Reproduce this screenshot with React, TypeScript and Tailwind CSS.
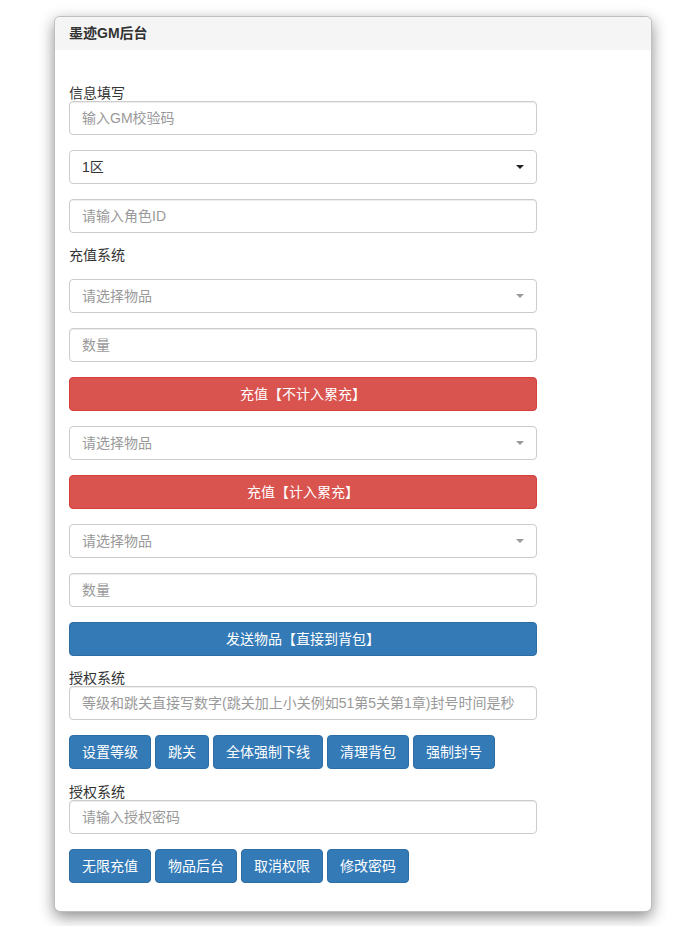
import React from 'react'

const font = "font-['Liberation_Sans','Noto_Sans_CJK_SC',sans-serif]"

const inputCls =
  'block h-[34px] w-full rounded-[4px] border border-[#ccc] bg-white px-3 text-[14px] leading-5 text-[#555] placeholder:text-[#999] shadow-[inset_0_1px_1px_rgba(0,0,0,0.075)] outline-none'

function TextInput({ placeholder, className = '' }: { placeholder: string; className?: string }) {
  return <input type="text" placeholder={placeholder} className={`${inputCls} ${className}`} />
}

function SelectBox({ label, muted, className = '' }: { label: string; muted?: boolean; className?: string }) {
  return (
    <div
      className={`flex h-[34px] w-full items-center justify-between rounded-[4px] border border-[#ccc] bg-white pl-3 pr-[12px] text-[14px] leading-5 ${
        muted ? 'text-[#999]' : 'text-[#333]'
      } ${className}`}
    >
      <span>{label}</span>
      <span
        className={`h-0 w-0 border-x-[4px] border-t-[4px] border-x-transparent ${
          muted ? 'border-t-[#999]' : 'border-t-[#222]'
        }`}
      />
    </div>
  )
}

function WideButton({ text, color, className = '' }: { text: string; color: 'red' | 'blue'; className?: string }) {
  const tone =
    color === 'red'
      ? 'bg-[#d9534f] border-[#d43f3a]'
      : 'bg-[#337ab7] border-[#2e6da4]'
  return (
    <button
      type="button"
      className={`block h-[34px] w-full rounded-[4px] border text-[14px] leading-5 text-white ${tone} ${className}`}
    >
      {text}
    </button>
  )
}

function SmallButton({ text }: { text: string }) {
  return (
    <button
      type="button"
      className="h-[34px] rounded-[4px] border border-[#2e6da4] bg-[#337ab7] px-3 text-[14px] leading-5 text-white"
    >
      {text}
    </button>
  )
}

export default function App() {
  return (
    <div className={`min-h-screen bg-white pl-[54px] pt-[16px] text-[#333] ${font}`}>
      <div className="w-[598px] rounded-[6px] border border-[rgba(0,0,0,0.25)] bg-white shadow-[0_5px_15px_rgba(0,0,0,0.45)]">
        {/* Header */}
        <div className="flex h-[33px] items-center rounded-t-[5px] bg-[#f5f5f5] pl-[14px] text-[14px] font-bold text-[#333]">
          墨迹GM后台
        </div>

        {/* Body */}
        <div className="px-[14px] pb-[28px] pt-[35px]">
          <div className="flex w-[468px] flex-col">
            <div className="h-4 text-[14px] leading-4">信息填写</div>
            <TextInput placeholder="输入GM校验码" />
            <SelectBox label="1区" className="mt-[15px]" />
            <TextInput placeholder="请输入角色ID" className="mt-[15px]" />

            <div className="mt-[14px] h-4 text-[14px] leading-4">充值系统</div>
            <SelectBox label="请选择物品" muted className="mt-4" />
            <TextInput placeholder="数量" className="mt-[15px]" />
            <WideButton text="充值【不计入累充】" color="red" className="mt-[15px]" />
            <SelectBox label="请选择物品" muted className="mt-[15px]" />
            <WideButton text="充值【计入累充】" color="red" className="mt-[15px]" />
            <SelectBox label="请选择物品" muted className="mt-[15px]" />
            <TextInput placeholder="数量" className="mt-[15px]" />
            <WideButton text="发送物品【直接到背包】" color="blue" className="mt-[15px]" />

            <div className="mt-[14px] h-4 text-[14px] leading-4">授权系统</div>
            <TextInput placeholder="等级和跳关直接写数字(跳关加上小关例如51第5关第1章)封号时间是秒" />
            <div className="mt-[15px] flex gap-1">
              <SmallButton text="设置等级" />
              <SmallButton text="跳关" />
              <SmallButton text="全体强制下线" />
              <SmallButton text="清理背包" />
              <SmallButton text="强制封号" />
            </div>

            <div className="mt-[15px] h-4 text-[14px] leading-4">授权系统</div>
            <TextInput placeholder="请输入授权密码" />
            <div className="mt-[15px] flex gap-1">
              <SmallButton text="无限充值" />
              <SmallButton text="物品后台" />
              <SmallButton text="取消权限" />
              <SmallButton text="修改密码" />
            </div>
          </div>
        </div>
      </div>
    </div>
  )
}
